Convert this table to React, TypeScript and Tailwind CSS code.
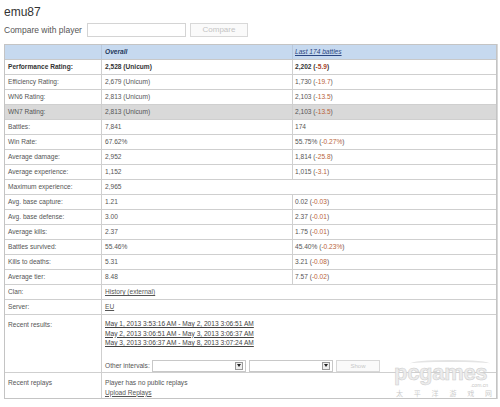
import React from "react";

type Row = {
  label: string;
  overall: React.ReactNode;
  recent?: React.ReactNode;
  bold?: boolean;
  shaded?: boolean;
};

const Neg = ({ base, delta, bold }: { base: string; delta: string; bold?: boolean }) => (
  <span className={bold ? "font-bold text-[#333]" : ""}>
    {base} (<span className={bold ? "text-[#a8432a]" : "text-[#b9643a]"}>{delta}</span>)
  </span>
);

const rows: Row[] = [
  { label: "Performance Rating:", overall: "2,528 (Unicum)", recent: <Neg base="2,202" delta="-5.9" bold />, bold: true },
  { label: "Efficiency Rating:", overall: "2,679 (Unicum)", recent: <Neg base="1,730" delta="-19.7" /> },
  { label: "WN6 Rating:", overall: "2,813 (Unicum)", recent: <Neg base="2,103" delta="-13.5" /> },
  { label: "WN7 Rating:", overall: "2,813 (Unicum)", recent: <Neg base="2,103" delta="-13.5" />, shaded: true },
  { label: "Battles:", overall: "7,841", recent: "174" },
  { label: "Win Rate:", overall: "67.62%", recent: <Neg base="55.75%" delta="-0.27%" /> },
  { label: "Average damage:", overall: "2,952", recent: <Neg base="1,814" delta="-25.8" /> },
  { label: "Average experience:", overall: "1,152", recent: <Neg base="1,015" delta="-3.1" /> },
  { label: "Maximum experience:", overall: "2,965" },
  { label: "Avg. base capture:", overall: "1.21", recent: <Neg base="0.02" delta="-0.03" /> },
  { label: "Avg. base defense:", overall: "3.00", recent: <Neg base="2.37" delta="-0.01" /> },
  { label: "Average kills:", overall: "2.37", recent: <Neg base="1.75" delta="-0.01" /> },
  { label: "Battles survived:", overall: "55.46%", recent: <Neg base="45.40%" delta="-0.23%" /> },
  { label: "Kills to deaths:", overall: "5.31", recent: <Neg base="3.21" delta="-0.08" /> },
  { label: "Average tier:", overall: "8.48", recent: <Neg base="7.57" delta="-0.02" /> },
  { label: "Clan:", overall: <a className="underline">History (external)</a> },
  { label: "Server:", overall: <a className="underline">EU</a> },
];

function Select({ w }: { w: string }) {
  return (
    <div className={`flex h-[12px] items-center justify-end border border-[#c8c8c8] bg-white pr-[2px] ${w}`}>
      <div className="flex h-[8px] w-[8px] items-center justify-center border border-[#999] bg-[#eee]">
        <div className="h-0 w-0 border-x-[2px] border-t-[3px] border-x-transparent border-t-[#222]" />
      </div>
    </div>
  );
}

export default function App() {
  return (
    <div
      className="relative h-[407px] w-[500px] overflow-hidden bg-white text-[#555]"
      style={{ fontFamily: '"Liberation Sans", Arial, sans-serif' }}
    >
      <div className="px-[4px] pt-[5px]">
        <h1 className="text-[12px] leading-[14px] text-[#333]">emu87</h1>
        <div className="mt-[4px] flex h-[14px] items-center gap-[4px]">
          <span className="text-[8.5px] leading-[14px] text-[#555]">Compare with player</span>
          <div className="ml-[1px] h-[14px] w-[99px] border border-[#d4d4d4] bg-white" />
          <button className="h-[14px] w-[58px] border border-[#d8d8d8] bg-[#fafafa] text-[8px] leading-[12px] text-[#c4c4c4]">
            Compare
          </button>
        </div>

        <div className="mt-[7px] w-[493px] border border-[#c4c4c4] text-[6.6px] shadow-[1px_0_0_#d8d8d8]">
          <div className="flex h-[15px] items-center border-b border-[#c8c8c8] bg-[#c6d9ef]">
            <div className="h-full w-[97px] border-r border-[#b8c8dc]" />
            <div className="flex h-full w-[191px] items-center border-r border-[#b8c8dc] pl-[3px] font-bold italic text-[#22375a]">
              Overall
            </div>
            <div className="flex h-full flex-1 items-center pl-[2px] italic text-[#2a4682] underline">
              Last 174 battles
            </div>
          </div>

          {rows.map((r) => (
            <div
              key={r.label}
              className={`flex h-[15px] items-center border-b border-[#cfcfcf] ${r.shaded ? "bg-[#d9d9d9]" : "bg-white"}`}
            >
              <div className={`flex h-full w-[97px] items-center border-r border-[#cfcfcf] pl-[3px] ${r.bold ? "font-bold text-[#333]" : ""}`}>
                {r.label}
              </div>
              {r.recent !== undefined ? (
                <>
                  <div className={`flex h-full w-[191px] items-center border-r border-[#cfcfcf] pl-[3px] ${r.bold ? "font-bold text-[#333]" : ""}`}>
                    {r.overall}
                  </div>
                  <div className="flex h-full flex-1 items-center pl-[2px]">{r.recent}</div>
                </>
              ) : (
                <div className="flex h-full flex-1 items-center pl-[3px]">{r.overall}</div>
              )}
            </div>
          ))}

          <div className="flex h-[58px] border-b border-[#cfcfcf]">
            <div className="w-[97px] border-r border-[#cfcfcf] pl-[3px] pt-[5px]">Recent results:</div>
            <div className="flex-1 pl-[3px] pt-[4px] leading-[9.5px] text-[#444]">
              <a className="block underline">May 1, 2013 3:53:16 AM - May 2, 2013 3:06:51 AM</a>
              <a className="block underline">May 2, 2013 3:06:51 AM - May 3, 2013 3:06:37 AM</a>
              <a className="block underline">May 3, 2013 3:06:37 AM - May 8, 2013 3:07:24 AM</a>
              <div className="mt-[12px] flex items-center">
                <span className="w-[47px] text-[#555]">Other intervals:</span>
                <Select w="w-[94px]" />
                <div className="w-[3px]" />
                <Select w="w-[84px]" />
                <button className="ml-[3px] h-[12px] w-[44px] border border-[#d8d8d8] bg-[#fafafa] text-[6px] leading-[10px] text-[#c8c8c8]">
                  Show
                </button>
              </div>
            </div>
          </div>

          <div className="flex h-[25px]">
            <div className="w-[97px] border-r border-[#cfcfcf] pl-[3px] pt-[5px]">Recent replays</div>
            <div className="flex-1 pl-[3px] pt-[5px] leading-[9.5px]">
              <div>Player has no public replays</div>
              <a className="block underline">Upload Replays</a>
            </div>
          </div>
        </div>
      </div>

      {/* watermark */}
      <div className="pointer-events-none absolute left-[394px] top-[360px] w-[100px] select-none">
        <div className="ml-[16px] h-[7px] w-[80px] rounded-t-[100%] border-t-[2px] border-[#e4e4e4]" />
        <div className="-mt-[4px] text-[22px] font-bold leading-[19px] tracking-[-0.3px] text-[#ececec] [-webkit-text-stroke:0.5px_#cccccc]">
          pcgames
        </div>
        <div className="mt-[1px] pr-[6px] text-right text-[5px] leading-[5px] text-[#c4c4c4]">.com.cn</div>
        <div
          className="mt-[1px] flex justify-between px-[2px] text-[7px] leading-[8px] text-[#cccccc]"
          style={{ fontFamily: '"Noto Sans CJK SC", sans-serif' }}
        >
          <span>太</span>
          <span>平</span>
          <span>洋</span>
          <span>游</span>
          <span>戏</span>
          <span>网</span>
        </div>
      </div>
    </div>
  );
}
